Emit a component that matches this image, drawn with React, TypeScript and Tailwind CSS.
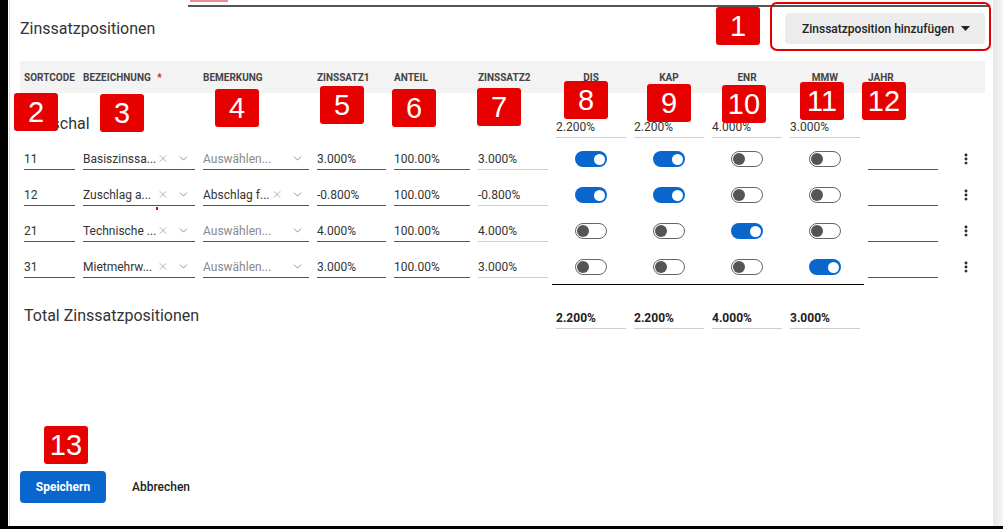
import React from "react";
import { X, ChevronDown, EllipsisVertical } from "lucide-react";

type Position = {
  code: string;
  bezeichnung: string;
  bemerkung: string | null;
  zinssatz1: string;
  anteil: string;
  zinssatz2: string;
  flags: boolean[];
};

const positions: Position[] = [
  { code: "11", bezeichnung: "Basiszinssa...", bemerkung: null, zinssatz1: "3.000%", anteil: "100.00%", zinssatz2: "3.000%", flags: [true, true, false, false] },
  { code: "12", bezeichnung: "Zuschlag a...", bemerkung: "Abschlag f...", zinssatz1: "-0.800%", anteil: "100.00%", zinssatz2: "-0.800%", flags: [true, true, false, false] },
  { code: "21", bezeichnung: "Technische ...", bemerkung: null, zinssatz1: "4.000%", anteil: "100.00%", zinssatz2: "4.000%", flags: [false, false, true, false] },
  { code: "31", bezeichnung: "Mietmehrw...", bemerkung: null, zinssatz1: "3.000%", anteil: "100.00%", zinssatz2: "3.000%", flags: [false, false, false, true] },
];

const pauschal = ["2.200%", "2.200%", "4.000%", "3.000%"];
const totals = ["2.200%", "2.200%", "4.000%", "3.000%"];

// callout markers laid over the form
const markers = [
  { n: "1", x: 716, y: 7 },
  { n: "2", x: 14, y: 93 },
  { n: "3", x: 100, y: 94 },
  { n: "4", x: 215, y: 89 },
  { n: "5", x: 320, y: 86 },
  { n: "6", x: 392, y: 89 },
  { n: "7", x: 477, y: 88 },
  { n: "8", x: 564, y: 81 },
  { n: "9", x: 647, y: 84 },
  { n: "10", x: 722, y: 85 },
  { n: "11", x: 800, y: 82 },
  { n: "12", x: 862, y: 82 },
  { n: "13", x: 44, y: 426 },
];

const grid =
  "grid grid-cols-[51px_112px_106px_69px_76px_70px_70px_70px_70px_70px_70px_39px] gap-x-2";

function Field({ children, light = false }: { children?: React.ReactNode; light?: boolean }) {
  return (
    <div
      className={`h-[22px] flex items-center text-[12px] text-[#333] border-b ${
        light ? "border-[#cfcfcf]" : "border-[#555]"
      }`}
    >
      {children}
    </div>
  );
}

function SelectField({ value, placeholder }: { value: string | null; placeholder: string }) {
  return (
    <div className="h-[22px] flex items-center text-[12px] border-b border-[#555]">
      <span className={`flex-1 min-w-0 whitespace-nowrap overflow-hidden ${value ? "text-[#333]" : "text-[#8a8a8a]"}`}>
        {value ?? placeholder}
      </span>
      {value && (
        <span className="w-[12px] mr-[2px] flex justify-center text-[#666]">
          <X size={19} strokeWidth={1} />
        </span>
      )}
      <span className="w-[24px] flex justify-center text-[#777]">
        <ChevronDown size={13} strokeWidth={1.5} />
      </span>
    </div>
  );
}

function Toggle({ on }: { on: boolean }) {
  return on ? (
    <div className="w-[32px] h-[16px] rounded-full bg-[#0866cc] flex items-center justify-end pr-[2px]">
      <div className="w-[11px] h-[11px] rounded-full bg-white" />
    </div>
  ) : (
    <div className="w-[32px] h-[16px] rounded-full bg-white border-[1.5px] border-[#666] flex items-center pl-[1px]">
      <div className="w-[12px] h-[12px] rounded-full bg-[#555]" />
    </div>
  );
}

export default function App() {
  return (
    <div
      className="relative w-[1003px] h-[529px] bg-black flex flex-col overflow-hidden"
      style={{ fontFamily: "Roboto, 'Noto Sans', sans-serif" }}
    >
      <div className="flex flex-1">
        <div className="w-[8px]" />
        <div className="flex-1 bg-white flex">
          <div className="w-[1px]" />
          <div className="flex-1 border-l border-[#dcdcdc] flex flex-col">
            {/* tab strip */}
            <div className="relative h-[7px]">
              <div className="absolute left-[180px] top-0 w-[38px] h-[2px] bg-[#f28b8b]" />
              <div className="ml-[178px] mr-[3px] mt-[5px] h-[2px] bg-[#555]" />
            </div>

            {/* title row */}
            <div className="mt-[6px] h-[31px] flex items-center justify-between pl-[10px] pr-[8px]">
              <h1 className="text-[16px] text-[#333]">Zinssatzpositionen</h1>
              <button className="h-[31px] w-[200px] rounded-[4px] bg-[#ececec] flex items-center pl-[17px] pr-[15px] text-[12px] font-medium text-[#222]">
                <span className="flex-1 text-left">Zinssatzposition hinzufügen</span>
                <svg width="9" height="5" viewBox="0 0 9 5">
                  <polygon points="0,0 9,0 4.5,5" fill="#222" />
                </svg>
              </button>
            </div>

            {/* column headers */}
            <div className={`mt-[17px] ml-[10px] mr-[8px] h-[32px] bg-[#f3f3f3] pl-[4px] items-center ${grid} text-[10px] font-bold text-[#444]`}>
              <div>SORTCODE</div>
              <div>
                BEZEICHNUNG <span className="text-[#d11] ml-[4px]">*</span>
              </div>
              <div>BEMERKUNG</div>
              <div>ZINSSATZ1</div>
              <div>ANTEIL</div>
              <div>ZINSSATZ2</div>
              <div className="text-center">DIS</div>
              <div className="text-center">KAP</div>
              <div className="text-center">ENR</div>
              <div className="text-center">MMW</div>
              <div>JAHR</div>
              <div />
            </div>

            <div className="ml-[14px] flex flex-col">
              {/* flat-rate row */}
              <div className={`mt-[23px] ${grid}`}>
                <div className="col-span-6 flex items-center text-[16px] text-[#333] -mt-[6px]">Pauschal</div>
                {pauschal.map((v, i) => (
                  <Field key={i} light>
                    {v}
                  </Field>
                ))}
              </div>

              {/* positions */}
              <div className="mt-[10px] flex flex-col gap-[14px]">
                {positions.map((p) => (
                  <div key={p.code} className={grid}>
                    <Field>{p.code}</Field>
                    <SelectField value={p.bezeichnung} placeholder="Auswählen..." />
                    <SelectField value={p.bemerkung} placeholder="Auswählen..." />
                    <Field>{p.zinssatz1}</Field>
                    <Field>{p.anteil}</Field>
                    <Field light>{p.zinssatz2}</Field>
                    {p.flags.map((f, i) => (
                      <div key={i} className="h-[22px] flex items-center justify-center">
                        <Toggle on={f} />
                      </div>
                    ))}
                    <Field />
                    <div className="h-[22px] flex items-center justify-center text-[#222]">
                      <EllipsisVertical size={14} strokeWidth={3} />
                    </div>
                  </div>
                ))}
              </div>

              {/* divider under the flag columns */}
              <div className={`mt-[6px] ${grid}`}>
                <div className="col-start-7 col-span-4 -mx-[4px] h-px bg-black" />
              </div>

              {/* totals */}
              <div className={`mt-[22px] ${grid}`}>
                <div className="col-span-6 flex items-center text-[16px] text-[#333] -mt-[4px]">Total Zinssatzpositionen</div>
                {totals.map((v, i) => (
                  <Field key={i} light>
                    <span className="font-bold text-[#222]">{v}</span>
                  </Field>
                ))}
              </div>
            </div>

            {/* actions */}
            <div className="mt-[142px] ml-[10px] flex items-center gap-[10px]">
              <button className="h-[32px] w-[86px] rounded-[4px] bg-[#0866cc] text-white text-[12px] font-bold">
                Speichern
              </button>
              <button className="h-[32px] px-[16px] text-[12px] font-medium text-[#222]">Abbrechen</button>
            </div>
          </div>
        </div>
        <div className="w-[10px] bg-gradient-to-r from-[#e6e6e6] to-[#f5f5f5]" />
      </div>
      <div className="h-[3px]" />

      {/* highlight around the add button */}
      <div className="absolute left-[770px] top-[2px] w-[221px] h-[49px] border-2 border-[#e00000] rounded-[7px]" />
      <div className="absolute left-[156px] top-[207px] w-[2px] h-[3px] bg-[#e00000]" />

      {markers.map((m) => (
        <div
          key={m.n}
          className="absolute w-[44px] h-[38px] rounded-[3px] bg-[#e60000] text-white text-[29px] flex items-center justify-center leading-none"
          style={{ left: m.x, top: m.y, fontFamily: "'Liberation Sans', Arial, sans-serif" }}
        >
          {m.n}
        </div>
      ))}
    </div>
  );
}
